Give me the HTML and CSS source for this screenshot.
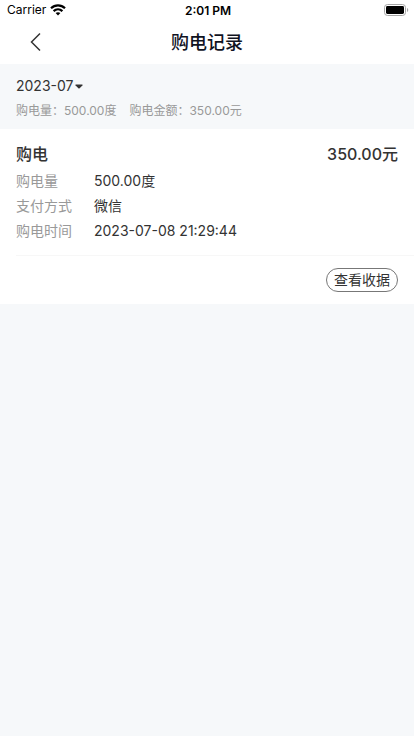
FILE: index.html
```html
<!DOCTYPE html>
<html lang="zh-CN">
<head>
<meta charset="utf-8">
<meta name="viewport" content="width=device-width, initial-scale=1">
<title>购电记录</title>
<link rel="stylesheet" href="styles.css">
</head>
<body>
<header class="top">
  <div class="status">
    <div class="carrier">
      <span>Carrier</span>
      <svg width="16" height="12" viewBox="0 0 16 12" fill="none" stroke="#000" stroke-width="2.2" aria-hidden="true">
        <path d="M1 4.3C5 .4 11 .4 15 4.3"/>
        <path d="M3.6 7.1C6.2 4.6 9.8 4.6 12.4 7.1"/>
        <path d="M8 11.6 5.6 9.1C7 7.9 9 7.9 10.4 9.1Z" fill="#000" stroke="none"/>
      </svg>
    </div>
    <span class="clock">2:01 PM</span>
    <svg class="battery" width="25" height="12" viewBox="0 0 25 12" aria-hidden="true">
      <rect x=".5" y=".5" width="21" height="11" rx="3" fill="none" stroke="#a5a5a5"/>
      <rect x="2" y="2" width="18" height="8" rx="1.4" fill="#000"/>
      <path d="M23 4v4c1.7-.7 1.7-3.3 0-4Z" fill="#a5a5a5"/>
    </svg>
  </div>
  <nav class="navbar">
    <button class="back" type="button" aria-label="返回">
      <svg width="12" height="20" viewBox="0 0 12 20" fill="none" stroke="#333" stroke-width="1.5" aria-hidden="true"><path d="M10 1.5 1.5 10 10 18.5"/></svg>
    </button>
    <h1 class="title">购电记录</h1>
  </nav>
</header>
<main>
  <section class="summary">
    <button class="month" type="button">2023-07<svg width="8" height="5" viewBox="0 0 8 5" aria-hidden="true"><path d="M1 .5h6Q8 .8 7.4 1.4L4.6 4.2Q4 4.7 3.4 4.2L.6 1.4Q0 .8 1 .5Z" fill="#333"/></svg></button>
    <p class="totals"><span>购电量：500.00度</span><span>购电金额：350.00元</span></p>
  </section>
  <article class="record">
    <div class="record-head"><h2>购电</h2><strong>350.00元</strong></div>
    <dl class="details">
      <dt>购电量</dt><dd>500.00度</dd>
      <dt>支付方式</dt><dd>微信</dd>
      <dt>购电时间</dt><dd>2023-07-08 21:29:44</dd>
    </dl>
    <div class="actions"><button class="receipt" type="button">查看收据</button></div>
  </article>
</main>
</body>
</html>
```
FILE: styles.css
```css
* {
  box-sizing: border-box;
}

body {
  margin: 0;
  background: #f6f8fa;
  color: #333;
  font-family: Inter, "Noto Sans CJK SC", sans-serif;
  font-size: 14px;
}

button {
  padding: 0;
  border: 0;
  background: none;
  color: inherit;
  font: inherit;
}

svg {
  display: block;
}

.top {
  background: #fff;
}

.status {
  display: grid;
  grid-template-columns: 1fr auto 1fr;
  align-items: center;
  height: 20px;
  padding: 0 5px 0 7px;
  color: #000;
  font-size: 12px;
  line-height: 20px;
}

.carrier {
  display: flex;
  align-items: center;
  gap: 4px;
}

.clock {
  padding-top: 2px;
  font-weight: 600;
  line-height: 18px;
}

.battery {
  justify-self: end;
}

.navbar {
  display: grid;
  grid-template-columns: 48px 1fr 48px;
  align-items: center;
  height: 44px;
  padding: 0 12px;
}

.back {
  display: flex;
  align-items: center;
  justify-content: center;
  height: 44px;
}

.title {
  margin: 0;
  padding-top: 2px;
  color: #10131f;
  font-size: 18px;
  font-weight: 500;
  line-height: 40px;
  text-align: center;
}

.summary {
  padding: 12px 16px 8px;
}

.month {
  display: flex;
  align-items: center;
  gap: 2px;
  line-height: 20px;
}

.totals {
  display: flex;
  gap: 13px;
  margin: 5px 0 0;
  color: #999;
  font-size: 12px;
  line-height: 20px;
}

.record {
  padding: 12px 0;
  background: #fff;
}

.record-head {
  display: flex;
  justify-content: space-between;
  padding: 0 16px;
  font-size: 16px;
  line-height: 27px;
}

.record-head h2,
.record-head strong {
  margin: 0;
  font-size: inherit;
  font-weight: 500;
}

.details {
  display: grid;
  grid-template-columns: 78px 1fr;
  margin: 0 0 0 16px;
  padding-bottom: 12px;
  border-bottom: 1px solid #f7f7f7;
  line-height: 25px;
}

.details dt {
  color: #999;
}

.details dd {
  margin: 0;
}

.actions {
  display: flex;
  justify-content: flex-end;
  padding: 12px 16px 0;
}

.receipt {
  height: 24px;
  padding: 0 7px;
  border: 1px solid #777;
  border-radius: 12px;
  line-height: 22px;
}
```
